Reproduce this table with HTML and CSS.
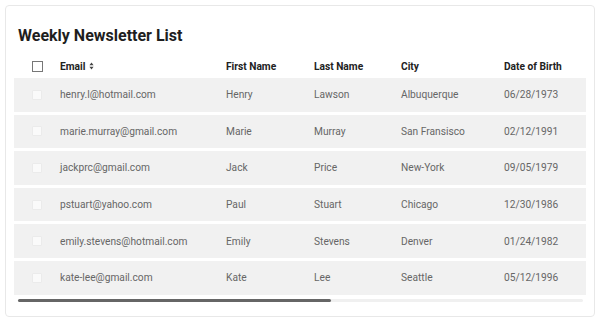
FILE: index.html
```html
<!DOCTYPE html>
<html lang="en">
<head>
    <meta charset="UTF-8">
    <meta name="viewport" content="width=device-width, initial-scale=1.0">
    <title>Weekly Newsletter List</title>
    <link rel="stylesheet" href="styles.css">
</head>
<body>
    <div class="card">
        <h1>Weekly Newsletter List</h1>
        <table class="list">
            <thead>
                <tr>
                    <th class="check"><span class="box head-box"></span></th>
                    <th class="email">Email
                        <svg class="sort" width="5" height="8" viewBox="0 0 5 8">
                            <path d="M2.5 0.5 L4.6 3.2 H0.4 Z M2.5 7.5 L4.6 4.8 H0.4 Z" fill="#444"/>
                        </svg>
                    </th>
                    <th class="first">First Name</th>
                    <th class="last">Last Name</th>
                    <th class="city">City</th>
                    <th class="dob">Date of Birth</th>
                </tr>
            </thead>
            <tbody>
                <tr>
                    <td class="check"><span class="box"></span></td>
                    <td>henry.l@hotmail.com</td>
                    <td>Henry</td>
                    <td>Lawson</td>
                    <td>Albuquerque</td>
                    <td>06/28/1973</td>
                </tr>
                <tr>
                    <td class="check"><span class="box"></span></td>
                    <td>marie.murray@gmail.com</td>
                    <td>Marie</td>
                    <td>Murray</td>
                    <td>San Fransisco</td>
                    <td>02/12/1991</td>
                </tr>
                <tr>
                    <td class="check"><span class="box"></span></td>
                    <td>jackprc@gmail.com</td>
                    <td>Jack</td>
                    <td>Price</td>
                    <td>New-York</td>
                    <td>09/05/1979</td>
                </tr>
                <tr>
                    <td class="check"><span class="box"></span></td>
                    <td>pstuart@yahoo.com</td>
                    <td>Paul</td>
                    <td>Stuart</td>
                    <td>Chicago</td>
                    <td>12/30/1986</td>
                </tr>
                <tr>
                    <td class="check"><span class="box"></span></td>
                    <td>emily.stevens@hotmail.com</td>
                    <td>Emily</td>
                    <td>Stevens</td>
                    <td>Denver</td>
                    <td>01/24/1982</td>
                </tr>
                <tr>
                    <td class="check"><span class="box"></span></td>
                    <td>kate-lee@gmail.com</td>
                    <td>Kate</td>
                    <td>Lee</td>
                    <td>Seattle</td>
                    <td>05/12/1996</td>
                </tr>
            </tbody>
        </table>
        <div class="scroll-track">
            <div class="scroll-thumb"></div>
        </div>
    </div>
</body>
</html>
```

FILE: styles.css
```css
body {
    margin: 0;
    background-color: #fff;
    font-family: Roboto, "Liberation Sans", Arial, sans-serif;
}

.card {
    margin: 5px;
    width: 590px;
    height: 312px;
    box-sizing: border-box;
    border: 1px solid #e8e8e8;
    border-radius: 4px;
    padding: 0 8px;
    background-color: #fff;
}

h1 {
    margin: 0;
    padding: 19px 0 0 4px;
    font-size: 16px;
    font-weight: 700;
    color: #1e1e1e;
    line-height: 22px;
}

.list {
    margin-top: 7px;
    border-collapse: separate;
    border-spacing: 0 3px;
    width: 572px;
    table-layout: fixed;
    font-size: 10.2px;
}

.list th {
    text-align: left;
    font-weight: 700;
    color: #222;
    height: 18px;
    padding: 0;
}

.list td {
    background-color: #f1f1f1;
    color: #666;
    height: 33.6px;
    padding: 0;
}

.check {
    width: 46px;
    padding-left: 18px !important;
    box-sizing: border-box;
}

.email { width: 166px; }
.first { width: 88px; }
.last { width: 87px; }
.city { width: 103px; }

.box {
    display: block;
    width: 8px;
    height: 8px;
    border: 1px solid #ebebeb;
    background-color: #fafafa;
    border-radius: 1px;
}

.head-box {
    width: 9px;
    height: 9px;
    border: 1px solid #777;
    background-color: #fff;
    border-radius: 0;
}

.sort {
    margin-left: 1px;
    vertical-align: -0.5px;
}

.scroll-track {
    margin: 1px 0 0 4px;
    width: 565px;
    height: 3px;
    background-color: #f0f0f0;
    border-radius: 2px;
}

.scroll-thumb {
    width: 313px;
    height: 3px;
    background-color: #666;
    border-radius: 2px;
}
```
